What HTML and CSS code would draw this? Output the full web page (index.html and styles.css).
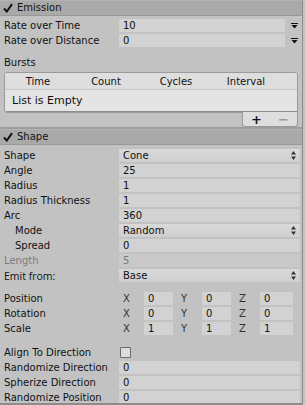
FILE: index.html
```html
<!DOCTYPE html>
<html>
<head>
  <title>Particle System Inspector</title>
  <link rel="stylesheet" href="styles.css">
</head>
<body>
  <div class="inspector">

    <!-- Emission module -->
    <div class="module-header">
      <svg class="check" width="10" height="10" viewBox="0 0 10 10"><path d="M1 5.5 L3.8 8.5 L9 1.2" fill="none" stroke="#111" stroke-width="2"/></svg>
      <span>Emission</span>
    </div>
    <div class="module-body emission">
      <div class="row">
        <span class="label">Rate over Time</span>
        <span class="field short">10</span>
        <svg class="curve-arrow" width="7" height="6" viewBox="0 0 7 6"><rect x="0" y="0" width="7" height="1" fill="#111"/><path d="M0.5 2 L6.5 2 L3.5 5.5 Z" fill="#111"/></svg>
      </div>
      <div class="row">
        <span class="label">Rate over Distance</span>
        <span class="field short">0</span>
        <svg class="curve-arrow" width="7" height="6" viewBox="0 0 7 6"><rect x="0" y="0" width="7" height="1" fill="#111"/><path d="M0.5 2 L6.5 2 L3.5 5.5 Z" fill="#111"/></svg>
      </div>

      <div class="bursts-label">Bursts</div>
      <div class="bursts">
        <div class="bursts-head">
          <span>Time</span>
          <span>Count</span>
          <span>Cycles</span>
          <span>Interval</span>
        </div>
        <div class="bursts-body">List is Empty</div>
      </div>
      <div class="bursts-foot">
        <span class="plus">+</span>
        <span class="minus">&minus;</span>
      </div>
    </div>

    <!-- Shape module -->
    <div class="module-header">
      <svg class="check" width="10" height="10" viewBox="0 0 10 10"><path d="M1 5.5 L3.8 8.5 L9 1.2" fill="none" stroke="#111" stroke-width="2"/></svg>
      <span>Shape</span>
    </div>
    <div class="module-body shape">
      <div class="row">
        <span class="label">Shape</span>
        <span class="field popup">Cone
          <svg class="updown" width="5" height="9" viewBox="0 0 5 9"><path d="M0 3.5 L5 3.5 L2.5 0 Z M0 5.5 L5 5.5 L2.5 9 Z" fill="#333"/></svg>
        </span>
      </div>
      <div class="row"><span class="label">Angle</span><span class="field">25</span></div>
      <div class="row"><span class="label">Radius</span><span class="field">1</span></div>
      <div class="row"><span class="label">Radius Thickness</span><span class="field">1</span></div>
      <div class="row"><span class="label">Arc</span><span class="field">360</span></div>
      <div class="row">
        <span class="label indent">Mode</span>
        <span class="field popup">Random
          <svg class="updown" width="5" height="9" viewBox="0 0 5 9"><path d="M0 3.5 L5 3.5 L2.5 0 Z M0 5.5 L5 5.5 L2.5 9 Z" fill="#333"/></svg>
        </span>
      </div>
      <div class="row"><span class="label indent">Spread</span><span class="field">0</span></div>
      <div class="row disabled"><span class="label">Length</span><span class="field">5</span></div>
      <div class="row">
        <span class="label alt">Emit from:</span>
        <span class="field popup">Base
          <svg class="updown" width="5" height="9" viewBox="0 0 5 9"><path d="M0 3.5 L5 3.5 L2.5 0 Z M0 5.5 L5 5.5 L2.5 9 Z" fill="#333"/></svg>
        </span>
      </div>

      <div class="vector-group">
        <div class="row">
          <span class="label">Position</span>
          <div class="xyz">
            <span class="axis">X</span><span class="field">0</span>
            <span class="axis">Y</span><span class="field">0</span>
            <span class="axis">Z</span><span class="field">0</span>
          </div>
        </div>
        <div class="row">
          <span class="label">Rotation</span>
          <div class="xyz">
            <span class="axis">X</span><span class="field">0</span>
            <span class="axis">Y</span><span class="field">0</span>
            <span class="axis">Z</span><span class="field">0</span>
          </div>
        </div>
        <div class="row">
          <span class="label">Scale</span>
          <div class="xyz">
            <span class="axis">X</span><span class="field">1</span>
            <span class="axis">Y</span><span class="field">1</span>
            <span class="axis">Z</span><span class="field">1</span>
          </div>
        </div>
      </div>

      <div class="row">
        <span class="label">Align To Direction</span>
        <span class="checkbox"></span>
      </div>
      <div class="row"><span class="label">Randomize Direction</span><span class="field">0</span></div>
      <div class="row"><span class="label">Spherize Direction</span><span class="field">0</span></div>
      <div class="row"><span class="label">Randomize Position</span><span class="field">0</span></div>
    </div>

  </div>
</body>
</html>
```

FILE: styles.css
```css
body {
  margin: 0;
  background: #c2c2c2;
  font-family: 'DejaVu Sans', Verdana, sans-serif;
  font-size: 10px;
  color: #111;
}

.inspector {
  width: 302px;
  height: 403px;
  border-right: 1px solid #8c8c8c;
  border-bottom: 2px solid #8c8c8c;
  overflow: hidden;
}

.module-header {
  height: 15px;
  display: flex;
  align-items: center;
  gap: 4px;
  padding-left: 3px;
  background: #a9a9a9;
  border-bottom: 1px solid #989898;
  box-shadow: inset 0 1px 0 #b4b4b4;
}

.module-body {
  padding-top: 2px;
}

.module-body.emission {
  height: 109px;
  border-bottom: 2px solid #9c9c9c;
}

.module-body.shape {
  padding-top: 3px;
}

.row {
  display: flex;
  align-items: center;
  height: 15px;
  padding-left: 4px;
}

.label {
  width: 115px;
  flex: none;
}

.label.indent {
  padding-left: 11px;
  width: 104px;
}

.label.alt {
  font-family: 'Open Sans', sans-serif;
  font-size: 10.5px;
}

.field {
  flex: 1;
  height: 13px;
  line-height: 13px;
  margin-right: 2px;
  padding-left: 4px;
  background: #d2d2d2;
  display: flex;
  align-items: center;
}

.field.short {
  flex: none;
  width: 162px;
}

.field.popup {
  justify-content: space-between;
  padding-right: 4px;
  background: linear-gradient(#d9d9d9, #cfcfcf);
}

.curve-arrow {
  margin-left: 4px;
}

.disabled {
  color: #7c7c7c;
}

.disabled .field {
  background: #c9c9c9;
}

.bursts-label {
  height: 14px;
  line-height: 14px;
  margin-top: 8px;
  padding-left: 4px;
}

.bursts {
  margin: 2px 4px 0 4px;
  border: 1px solid #9a9a9a;
  border-radius: 3px 3px 0 3px;
  background: #e4e4e4;
  overflow: hidden;
}

.bursts-head {
  display: grid;
  grid-template-columns: 66px 70px 70px 70px;
  height: 16px;
  align-items: center;
  background: #dedede;
  border-bottom: 1px solid #c8c8c8;
}

.bursts-head span {
  text-align: center;
}

.bursts-body {
  height: 21px;
  line-height: 21px;
  padding-left: 7px;
  font-size: 11px;
  border-bottom: 1px solid #8e8e8e;
}

.bursts-foot {
  margin: -1px 4px 0 auto;
  width: 54px;
  height: 14px;
  display: flex;
  justify-content: space-around;
  align-items: center;
  background: #dedede;
  border: 1px solid #9a9a9a;
  border-top: none;
  border-radius: 0 0 3px 3px;
  font-size: 13px;
  font-weight: bold;
}

.bursts-foot .minus {
  color: #9a9a9a;
}

.vector-group {
  margin: 8px 0 9px;
}

.xyz {
  flex: 1;
  display: grid;
  grid-template-columns: 25px 33px 25px 33px 25px 33px;
  margin-right: 2px;
}

.xyz .axis {
  padding-left: 4px;
  height: 13px;
  line-height: 13px;
  color: #333;
}

.xyz .field {
  margin-right: 4px;
}

.xyz .field:last-child {
  margin-right: 0;
}

.checkbox {
  width: 9px;
  height: 9px;
  margin-left: 1px;
  border: 1px solid #6a6a6a;
  border-radius: 1px;
  background: #dcdcdc;
}
```
